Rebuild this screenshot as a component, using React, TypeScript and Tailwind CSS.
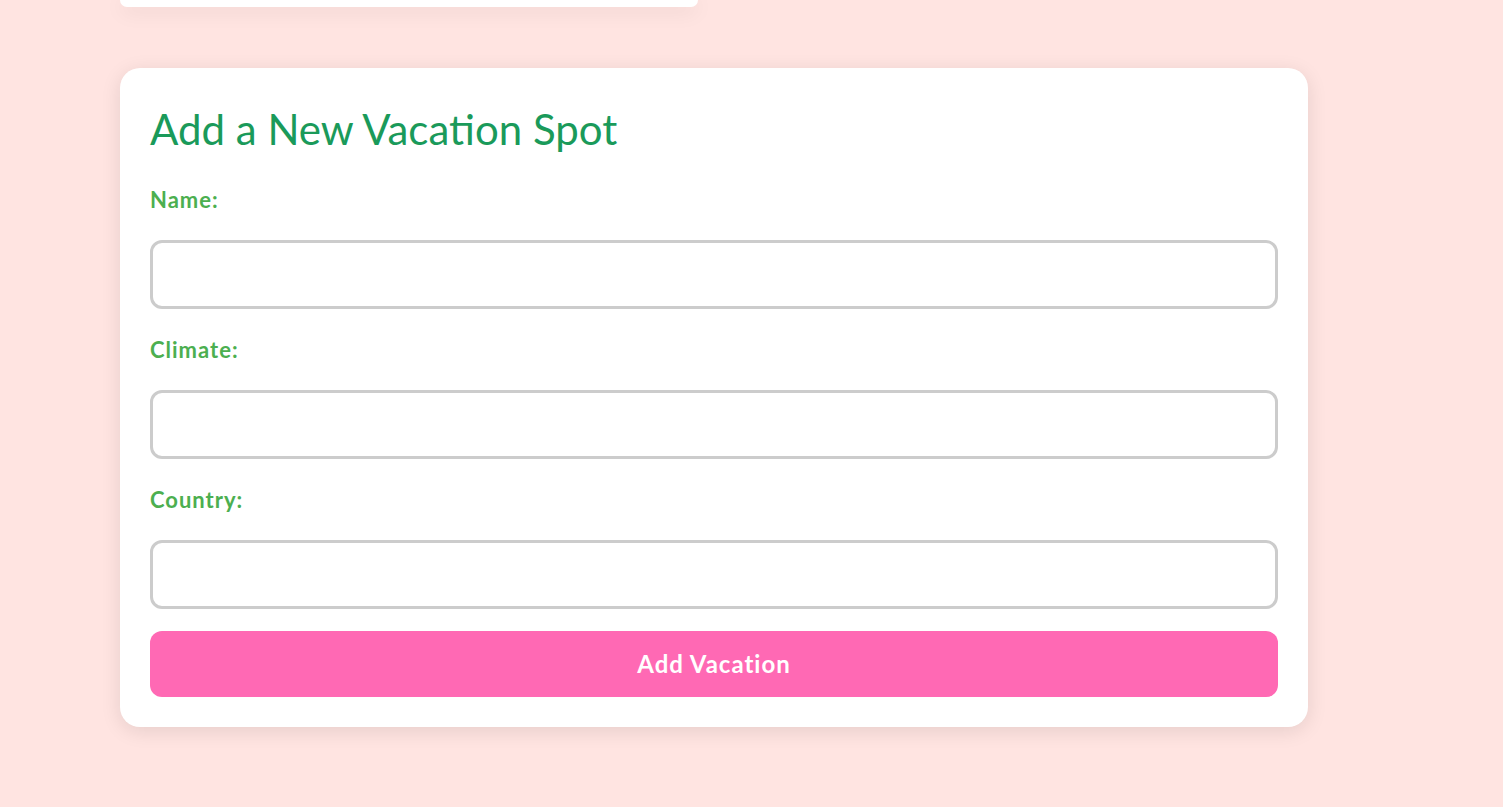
function Field({ label }: { label: string }) {
  return (
    <div className="flex flex-col">
      <label className="mt-[29px] h-6 text-[22px] leading-6 font-bold tracking-[1px] text-[#4caf50]">{label}</label>
      <input
        type="text"
        className="mt-[28px] h-[69px] w-full rounded-[12px] border-[3px] border-[#cccccc] bg-white px-4 text-lg outline-none"
      />
    </div>
  );
}

export default function App() {
  return (
    <div className="min-h-[807px] w-full bg-[#ffe4e1] pl-[120px]" style={{ fontFamily: '"Comic Sans MS", Lato, sans-serif' }}>
      <div className="h-[7px] w-[578px] rounded-b-[20px] bg-white shadow-[0_4px_20px_rgba(0,0,0,0.1)]" />

      <div className="mt-[61px] flex w-[1188px] flex-col rounded-[20px] bg-white p-[30px] shadow-[0_4px_20px_rgba(0,0,0,0.1)]">
        <h2 className="flex h-[61px] items-center text-[42px] leading-none text-[#1a9a5a]">Add a New Vacation Spot</h2>
        <Field label="Name:" />
        <Field label="Climate:" />
        <Field label="Country:" />
        <button className="mt-[22px] h-[66px] w-full rounded-[12px] bg-[#ff69b4] text-[24px] font-bold tracking-[1px] text-white">
          Add Vacation
        </button>
      </div>
    </div>
  );
}
